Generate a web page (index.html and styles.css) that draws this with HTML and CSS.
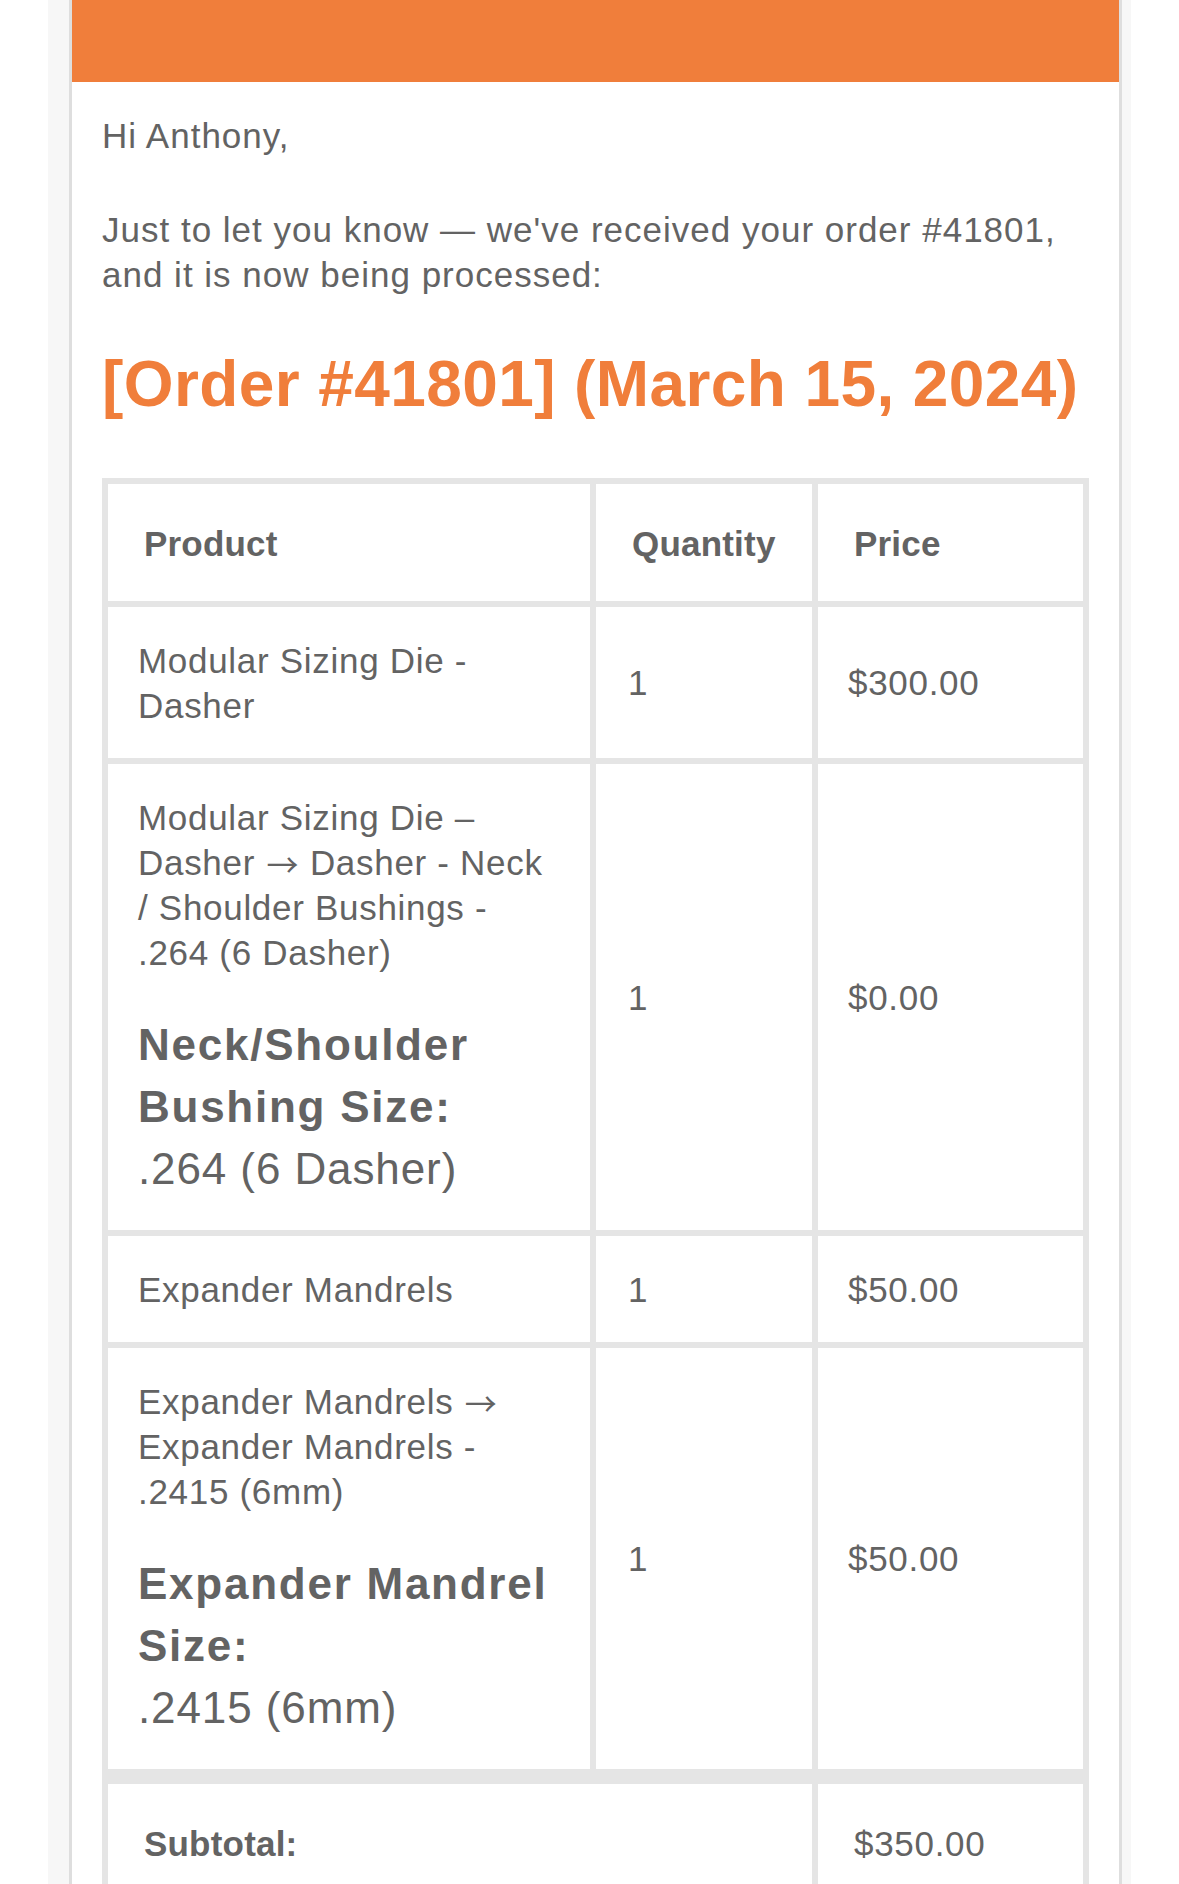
FILE: index.html
```html
<!DOCTYPE html>
<html lang="en">
<head>
<meta charset="utf-8">
<title>Order #41801</title>
<link rel="stylesheet" href="styles.css">
</head>
<body>
<div class="wrapper">
  <div class="container">
    <div class="header"></div>
    <div class="content">
      <p class="para greeting">Hi Anthony,</p>
      <p class="para intro">Just to let you know — we've received your order #41801, and it is now being processed:</p>
      <h2 class="order-title">[Order #41801] (March 15, 2024)</h2>
      <table class="order-table">
        <colgroup>
          <col class="col-product">
          <col class="col-qty">
          <col class="col-price">
        </colgroup>
        <thead>
          <tr>
            <th>Product</th>
            <th>Quantity</th>
            <th>Price</th>
          </tr>
        </thead>
        <tbody>
          <tr>
            <td>Modular Sizing Die - Dasher</td>
            <td class="qty">1</td>
            <td>$300.00</td>
          </tr>
          <tr>
            <td>Modular Sizing Die – Dasher <span class="arrow">→</span> Dasher - Neck / Shoulder Bushings - .264 (6 Dasher)
              <div class="meta">
                <strong class="meta-label">Neck/Shoulder Bushing Size:</strong>
                <p class="meta-value">.264 (6 Dasher)</p>
              </div>
            </td>
            <td class="qty">1</td>
            <td>$0.00</td>
          </tr>
          <tr>
            <td>Expander Mandrels</td>
            <td class="qty">1</td>
            <td>$50.00</td>
          </tr>
          <tr>
            <td>Expander Mandrels <span class="arrow">→</span> Expander Mandrels - .2415 (6mm)
              <div class="meta">
                <strong class="meta-label">Expander Mandrel Size:</strong>
                <p class="meta-value">.2415 (6mm)</p>
              </div>
            </td>
            <td class="qty">1</td>
            <td>$50.00</td>
          </tr>
        </tbody>
        <tfoot>
          <tr>
            <th colspan="2">Subtotal:</th>
            <td>$350.00</td>
          </tr>
          <tr>
            <th colspan="2">Shipping:</th>
            <td>Free shipping</td>
          </tr>
          <tr>
            <th colspan="2">Total:</th>
            <td>$350.00</td>
          </tr>
        </tfoot>
      </table>
    </div>
  </div>
</div>
</body>
</html>
```

FILE: styles.css
```css
html, body {
  margin: 0;
  padding: 0;
  background: #ffffff;
}

body {
  font-family: "Liberation Sans", Arial, Helvetica, sans-serif;
  color: #636363;
}

.wrapper {
  margin-left: 48px;
  width: 1083px;
  box-sizing: border-box;
  padding: 0 9px 0 21px;
  background: #f7f7f7;
  min-height: 2200px;
}

.container {
  border: 3px solid #dedede;
  border-top: 0;
  background: #ffffff;
}

.header {
  height: 82px;
  background: #f07e3b;
}

.content {
  padding: 31px 30px 60px;
}

.para {
  margin: 0 0 49px;
  font-size: 35px;
  line-height: 45px;
  letter-spacing: 1px;
}

.order-title {
  margin: 0 0 55px;
  font-size: 64px;
  line-height: 77px;
  font-weight: bold;
  letter-spacing: 0.4px;
  color: #f07e3b;
}

.order-table {
  width: 987px;
  table-layout: fixed;
  border: 3px solid #e5e5e5;
  border-collapse: separate;
  border-spacing: 0;
}

.col-product { width: 488px; }
.col-qty { width: 222px; }
.col-price { width: 271px; }

.order-table th,
.order-table td {
  border: 3px solid #e5e5e5;
  text-align: left;
  vertical-align: middle;
  font-size: 35px;
  line-height: 45px;
  color: #636363;
}

.order-table th {
  padding: 37px 35px 35px 36px;
  font-weight: bold;
  letter-spacing: 0.2px;
}

.order-table td {
  padding: 30.5px 29px 30.5px 30px;
  letter-spacing: 0.7px;
}

.order-table td.qty {
  padding-left: 32px;
}

.order-table tfoot tr:first-child th,
.order-table tfoot tr:first-child td {
  border-top-width: 12px;
}

.order-table tfoot td {
  padding: 37px 35px 35px 36px;
}

.arrow {
  font-family: "Noto Sans CJK JP", "Liberation Sans", sans-serif;
  font-size: 32px;
  line-height: 1;
  letter-spacing: 0;
  vertical-align: -2px;
  margin: 0 1px;
}

.meta {
  margin-top: 39px;
  font-size: 44px;
  line-height: 62px;
}

.meta-label {
  display: block;
  font-weight: bold;
  letter-spacing: 1.75px;
}

.meta-value {
  margin: 0;
  letter-spacing: 0.9px;
}
```
